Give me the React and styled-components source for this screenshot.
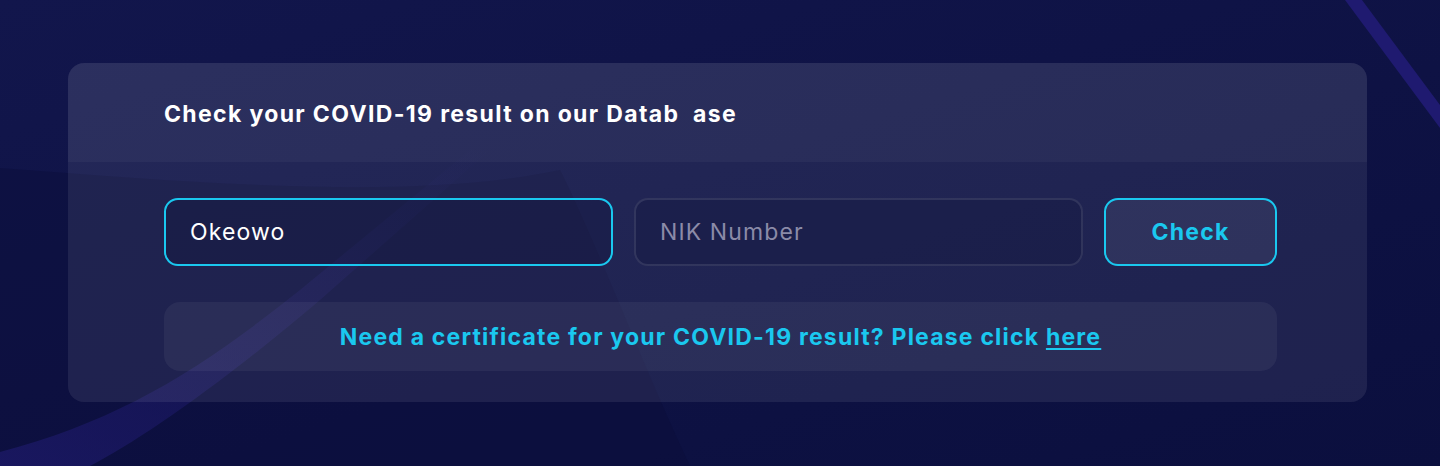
import React from 'react';
import styled, { createGlobalStyle } from 'styled-components';

const GlobalStyle = createGlobalStyle`
  html, body {
    margin: 0;
    padding: 0;
    background: #10144a;
  }
  * {
    box-sizing: border-box;
  }
`;

const App = () => {
  return (
    <Page>
      <GlobalStyle />
      <Backdrop viewBox="0 0 1440 466" preserveAspectRatio="none">
        <defs>
          <linearGradient id="bg" x1="0" y1="0" x2="1" y2="1">
            <stop offset="0" stopColor="#12164c" />
            <stop offset="1" stopColor="#0b0f3e" />
          </linearGradient>
          <linearGradient id="band" x1="0" y1="1" x2="1" y2="0">
            <stop offset="0" stopColor="#1e1a6c" stopOpacity="0.7" />
            <stop offset="0.6" stopColor="#1e1a6c" stopOpacity="0.3" />
            <stop offset="1" stopColor="#1e1a6c" stopOpacity="0" />
          </linearGradient>
        </defs>
        <rect width="1440" height="466" fill="url(#bg)" />
        {/* darker sweep under the left curve */}
        <path d="M0 168 C 220 185, 420 200, 560 170 C 600 250, 640 360, 690 466 L 0 466 Z" fill="#0a0e3a" opacity="0.45" />
        {/* faint diagonal band */}
        <path d="M0 466 L0 452 C 120 420, 200 370, 300 290 L 470 150 L 490 150 L 320 300 C 220 385, 140 440, 90 466 Z" fill="url(#band)" />
        {/* top-right stripe */}
        <path d="M1345 0 L1362 0 L1440 105 L1440 128 Z" fill="#1f1a70" />
      </Backdrop>
      <Card>
        <CardHeader>
          <Title>Check your COVID-19 result on our Datab{'\u00a0'} ase</Title>
        </CardHeader>
        <CardBody>
          <FormRow>
            <Field defaultValue="Okeowo" $active />
            <Field placeholder="NIK Number" />
            <CheckButton>Check</CheckButton>
          </FormRow>
          <Notice>
            Need a certificate for your COVID-19 result? Please click <NoticeLink href="#">here</NoticeLink>
          </Notice>
        </CardBody>
      </Card>
    </Page>
  );
};

const Page = styled.div`
  position: relative;
  width: 1440px;
  height: 466px;
  overflow: hidden;
  padding: 63px 73px 0 68px;
  font-family: 'Inter', 'Liberation Sans', sans-serif;
`;

const Backdrop = styled.svg`
  position: absolute;
  inset: 0;
  width: 100%;
  height: 100%;
  z-index: 0;
`;

const Card = styled.div`
  position: relative;
  z-index: 1;
  height: 339px;
  border-radius: 16px;
  background: rgba(255, 255, 255, 0.08);
  overflow: hidden;
`;

const CardHeader = styled.div`
  height: 99px;
  display: flex;
  align-items: center;
  padding: 2px 96px 0;
  background: rgba(255, 255, 255, 0.04);
`;

const Title = styled.h2`
  margin: 0;
  color: #ffffff;
  font-size: 23px;
  font-weight: 700;
  letter-spacing: 1.35px;
  white-space: pre;
`;

const CardBody = styled.div`
  padding: 36px 90px 0 96px;
  display: flex;
  flex-direction: column;
  gap: 36px;
`;

const FormRow = styled.div`
  display: grid;
  grid-template-columns: 449px 449px 173px;
  gap: 21px;
`;

const Field = styled.input`
  height: 68px;
  border-radius: 14px;
  border: 2px solid ${(p) => (p.$active ? '#1ac8ef' : 'rgba(255, 255, 255, 0.1)')};
  background: rgba(10, 12, 50, 0.22);
  padding: 0 24px;
  color: #ffffff;
  font-family: inherit;
  font-size: 23px;
  letter-spacing: 1.1px;
  outline: none;

  &::placeholder {
    color: #8b8ba8;
  }
`;

const CheckButton = styled.button`
  height: 68px;
  border-radius: 14px;
  border: 2px solid #1ac8ef;
  background: rgba(255, 255, 255, 0.07);
  color: #1ac8ef;
  font-family: inherit;
  font-size: 23px;
  font-weight: 700;
  letter-spacing: 1.2px;
  cursor: pointer;
`;

const Notice = styled.div`
  height: 69px;
  border-radius: 16px;
  background: rgba(255, 255, 255, 0.05);
  display: flex;
  align-items: center;
  justify-content: center;
  color: #1ac8ef;
  font-size: 23px;
  font-weight: 700;
  letter-spacing: 1.2px;
  white-space: pre;
`;

const NoticeLink = styled.a`
  color: #1ac8ef;
  text-decoration: underline;
  text-underline-offset: 3px;
`;

export default App;
